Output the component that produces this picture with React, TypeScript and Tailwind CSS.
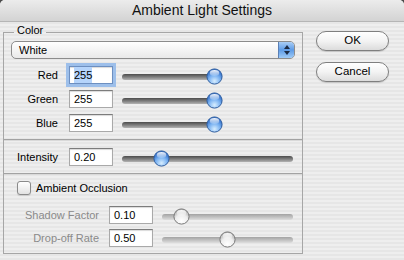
import React from "react";

function Knob({ disabled }: { disabled?: boolean }) {
  const id = disabled ? "knobDis" : "knobBlue";
  return (
    <svg width="17" height="17" viewBox="0 0 17 17">
      <defs>
        <radialGradient id={id} cx="50%" cy="80%" r="70%">
          {disabled ? (
            <>
              <stop offset="0" stopColor="#ffffff" />
              <stop offset="0.6" stopColor="#ededed" />
              <stop offset="1" stopColor="#b4b4b4" />
            </>
          ) : (
            <>
              <stop offset="0" stopColor="#d8eeff" />
              <stop offset="0.55" stopColor="#79b1f1" />
              <stop offset="1" stopColor="#2c69c6" />
            </>
          )}
        </radialGradient>
        <linearGradient id={id + "H"} x1="0" y1="0" x2="0" y2="1">
          <stop offset="0" stopColor="#ffffff" stopOpacity="0.95" />
          <stop offset="1" stopColor="#ffffff" stopOpacity="0.15" />
        </linearGradient>
      </defs>
      <circle cx="8.5" cy="8.5" r="7.6" fill={`url(#${id})`} stroke={disabled ? "#7a7a7a" : "#33609f"} strokeWidth="1" />
      <ellipse cx="8.5" cy="5" rx="4.8" ry="3" fill={`url(#${id}H)`} />
    </svg>
  );
}

function Slider({ className, trackWidth, value, disabled }: { className: string; trackWidth: number; value: number; disabled?: boolean }) {
  const left = value * (trackWidth - 16) - 0.5;
  return (
    <div className={"relative h-[18px] flex items-center " + className}>
      <div
        className={
          "mt-[3px] h-[6px] w-full rounded-full bg-linear-to-b " +
          (disabled ? "from-[#a3a3a3] to-[#dedede]" : "from-[#4c4c4c] to-[#b3b3b3]")
        }
      />
      <div className="absolute top-[2px]" style={{ left }}>
        <Knob disabled={disabled} />
      </div>
    </div>
  );
}

function Field({ children, focused }: { children: React.ReactNode; focused?: boolean }) {
  return (
    <div
      className={
        "w-[44px] h-[18px] bg-white border flex items-center pl-[4px] text-[11px] text-black shadow-[inset_0_1px_1px_rgba(0,0,0,0.15)] " +
        (focused
          ? "border-[#6d8fc0] ring-[3px] ring-[#9dbfea]"
          : "border-[#a9a9a9] border-t-[#7c7c7c]")
      }
    >
      {children}
    </div>
  );
}

function Separator() {
  return <div className="h-[2px] border-t border-[#a2a2a2] border-b border-b-[#d9d9d9]" />;
}

function AquaButton({ label }: { label: string }) {
  return (
    <div className="w-[73px] h-[20px] rounded-full border border-[#7f7f7f] bg-linear-to-b from-[#ffffff] via-[#f3f3f3] to-[#dcdcdc] shadow-[0_1px_1px_rgba(0,0,0,0.15)] flex items-center justify-center text-[11.5px] text-black">
      {label}
    </div>
  );
}

export default function App() {
  return (
    <div className="w-[404px] h-[260px] bg-[#4a4a4a] font-[family-name:'Liberation_Sans',Arial,sans-serif]">
      <div className="h-full rounded-t-[5px] overflow-hidden flex flex-col bg-[image:repeating-linear-gradient(180deg,#eeeeee_0px,#eeeeee_2px,#e6e6e6_2px,#e6e6e6_4px)]">
        <div className="h-[22px] shrink-0 flex items-center justify-center bg-linear-to-b from-[#ececec] to-[#d3d3d3] border-b border-[#b5b5b5] text-[14px] text-[#111]">
          Ambient Light Settings
        </div>
        <div className="flex pt-[2px] pl-[3px]">
          <fieldset className="w-[300px] h-[230px] border border-[#a6a6a6] flex flex-col">
            <legend className="ml-[10px] px-[3px] pb-[4px] text-[11px] leading-[12px] text-black">Color</legend>
            <div className="ml-[7px] mt-[1px] w-[284px] h-[18px] rounded-[5px] border border-[#8c8c8c] bg-linear-to-b from-[#ffffff] to-[#e9e9e9] flex items-center overflow-hidden">
              <span className="flex-1 pl-[7px] text-[11px] text-black">White</span>
              <div className="w-[16px] h-full bg-linear-to-b from-[#a9cdf5] via-[#5d9be6] to-[#9fcbf7] border-l border-[#5a7fb5] flex flex-col items-center justify-center gap-[2px]">
                <svg width="6" height="4" viewBox="0 0 6 4"><path d="M3 0 L6 4 L0 4 Z" fill="#1b2a44" /></svg>
                <svg width="6" height="4" viewBox="0 0 6 4"><path d="M0 0 L6 0 L3 4 Z" fill="#1b2a44" /></svg>
              </div>
            </div>
            <div className="mt-[7px] flex flex-col gap-[6px]">
              {[
                { label: "Red", focused: true },
                { label: "Green" },
                { label: "Blue" },
              ].map((r) => (
                <div key={r.label} className="flex items-center h-[18px]">
                  <span className="w-[54px] text-right text-[11px] text-black">{r.label}</span>
                  <div className="ml-[11px]">
                    <Field focused={r.focused}>
                      {r.focused ? <span className="bg-[#b5d4fb]">255</span> : "255"}
                    </Field>
                  </div>
                  <Slider className="ml-[9px] w-[100px]" trackWidth={100} value={1} />
                </div>
              ))}
            </div>
            <div className="mt-[7px]">
              <Separator />
            </div>
            <div className="mt-[7px] flex items-center h-[18px]">
              <span className="w-[54px] text-right text-[11px] text-black">Intensity</span>
              <div className="ml-[11px]">
                <Field>0.20</Field>
              </div>
              <Slider className="ml-[9px] w-[171px]" trackWidth={171} value={0.2} />
            </div>
            <div className="mt-[7px]">
              <Separator />
            </div>
            <div className="mt-[6px] flex items-center h-[14px]">
              <div className="ml-[13px] w-[14px] h-[14px] rounded-[3px] border border-[#8a8a8a] bg-linear-to-b from-[#ffffff] to-[#e2e2e2] shadow-[0_1px_1px_rgba(0,0,0,0.12)]" />
              <span className="ml-[5px] text-[11px] text-black">Ambient Occlusion</span>
            </div>
            <div className="mt-[11px] flex flex-col gap-[5px]">
              {[
                { label: "Shadow Factor", value: "0.10", v: 0.1 },
                { label: "Drop-off Rate", value: "0.50", v: 0.5 },
              ].map((r) => (
                <div key={r.label} className="flex items-center h-[18px]">
                  <span className="w-[95px] text-right text-[11px] text-[#8a8a8a]">{r.label}</span>
                  <div className="ml-[10px]">
                    <Field>{r.value}</Field>
                  </div>
                  <Slider className="ml-[9px] w-[131px]" trackWidth={131} value={r.v} disabled />
                </div>
              ))}
            </div>
          </fieldset>
          <div className="ml-[13px] pt-[7px] flex flex-col gap-[11px]">
            <AquaButton label="OK" />
            <AquaButton label="Cancel" />
          </div>
        </div>
      </div>
    </div>
  );
}
